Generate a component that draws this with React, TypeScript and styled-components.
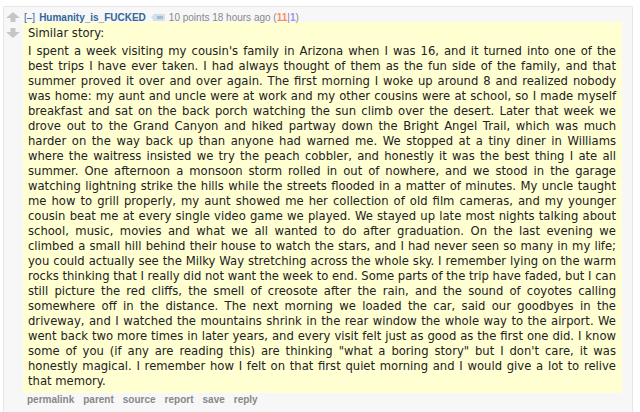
import React from "react";
import styled, { createGlobalStyle } from "styled-components";

const GlobalStyle = createGlobalStyle`
  html, body {
    margin: 0;
    padding: 0;
    background: #ffffff;
  }
`;

/**
 * Gray comment panel.
 */
const Panel = styled.div`
  display: flex;
  margin: 6px 7px 0 3px;
  padding: 4px 0 8px 0;
  min-height: 406px;
  box-sizing: border-box;
  background: #f7f7f7;
  border: 1px solid #e6e6e6;
  border-bottom: none;
  border-radius: 2px 2px 0 0;
`;

const Votes = styled.div`
  display: flex;
  flex-direction: column;
  align-items: center;
  gap: 6px;
  width: 17px;
  padding-top: 1px;
`;

const Entry = styled.div`
  flex: 1;
  margin-left: 2px;
  margin-right: 10px;
`;

const Tagline = styled.div`
  display: flex;
  align-items: center;
  font-family: "Liberation Sans", Arial, sans-serif;
  font-size: 10px;
  color: #888888;
  height: 12px;
  padding-left: 1px;
`;

const Expand = styled.span`
  color: #369;
  margin-right: 4px;
`;

const Author = styled.span`
  color: #369;
  font-weight: bold;
  margin-right: 5px;
`;

const Score = styled.span<{ $tone: "up" | "down" }>`
  font-weight: bold;
  color: ${(p) => (p.$tone === "up" ? "#ff8b60" : "#9494ff")};
`;

const Body = styled.div`
  background: #ffffd2;
  margin-top: -1px;
  padding: 4px 6px 4px 5px;
  font-family: "DejaVu Sans", Verdana, sans-serif;
  font-size: 11.6px;
  line-height: 15px;
  color: #222222;

  p {
    margin: 0 0 3px 0;
    text-align: justify;
  }
  p:last-child {
    margin-bottom: 0;
  }
`;

const Buttons = styled.ul`
  display: flex;
  gap: 9px;
  list-style: none;
  margin: 1px 0 0 0;
  padding: 0 0 0 4px;
  font-family: "Liberation Sans", Arial, sans-serif;
  font-size: 10px;
  font-weight: bold;
  color: #888888;
`;

const Arrow = ({ down }: { down?: boolean }) => (
  <svg width="14" height="10" viewBox="0 0 14 10" style={{ transform: down ? "rotate(180deg)" : undefined }}>
    <path d="M7 0 L14 6 L9.5 6 L9.5 10 L4.5 10 L4.5 6 L0 6 Z" fill="#c6c6c6" />
  </svg>
);

const FlairIcon = () => (
  <svg width="14" height="7" viewBox="0 0 14 7" style={{ marginRight: 4 }}>
    <path d="M0 3.5 L3 0 H13 a1 1 0 0 1 1 1 V6 a1 1 0 0 1 -1 1 H3 Z" fill="#d7dfe6" />
    <rect x="6" y="2" width="6" height="3" fill="#a9bccc" />
  </svg>
);

const paragraphs = [
  "Similar story:",
  "I spent a week visiting my cousin's family in Arizona when I was 16, and it turned into one of the best trips I have ever taken. I had always thought of them as the fun side of the family, and that summer proved it over and over again. The first morning I woke up around 8 and realized nobody was home: my aunt and uncle were at work and my other cousins were at school, so I made myself breakfast and sat on the back porch watching the sun climb over the desert. Later that week we drove out to the Grand Canyon and hiked partway down the Bright Angel Trail, which was much harder on the way back up than anyone had warned me. We stopped at a tiny diner in Williams where the waitress insisted we try the peach cobbler, and honestly it was the best thing I ate all summer. One afternoon a monsoon storm rolled in out of nowhere, and we stood in the garage watching lightning strike the hills while the streets flooded in a matter of minutes. My uncle taught me how to grill properly, my aunt showed me her collection of old film cameras, and my younger cousin beat me at every single video game we played. We stayed up late most nights talking about school, music, movies and what we all wanted to do after graduation. On the last evening we climbed a small hill behind their house to watch the stars, and I had never seen so many in my life; you could actually see the Milky Way stretching across the whole sky. I remember lying on the warm rocks thinking that I really did not want the week to end. Some parts of the trip have faded, but I can still picture the red cliffs, the smell of creosote after the rain, and the sound of coyotes calling somewhere off in the distance. The next morning we loaded the car, said our goodbyes in the driveway, and I watched the mountains shrink in the rear window the whole way to the airport. We went back two more times in later years, and every visit felt just as good as the first one did. I know some of you (if any are reading this) are thinking \"what a boring story\" but I don't care, it was honestly magical. I remember how I felt on that first quiet morning and I would give a lot to relive that memory.",
];

const App: React.FC = () => (
  <>
    <GlobalStyle />
    <Panel>
      <Votes>
        <Arrow />
        <Arrow down />
      </Votes>
      <Entry>
        <Tagline>
          <Expand>[–]</Expand>
          <Author>Humanity_is_FUCKED</Author>
          <FlairIcon />
          <span>
            10 points 18 hours ago (<Score $tone="up">11</Score>|<Score $tone="down">1</Score>)
          </span>
        </Tagline>
        <Body>
          {paragraphs.map((text, i) => (
            <p key={i}>{text}</p>
          ))}
        </Body>
        <Buttons>
          {["permalink", "parent", "source", "report", "save", "reply"].map((b) => (
            <li key={b}>{b}</li>
          ))}
        </Buttons>
      </Entry>
    </Panel>
  </>
);

export default App;
